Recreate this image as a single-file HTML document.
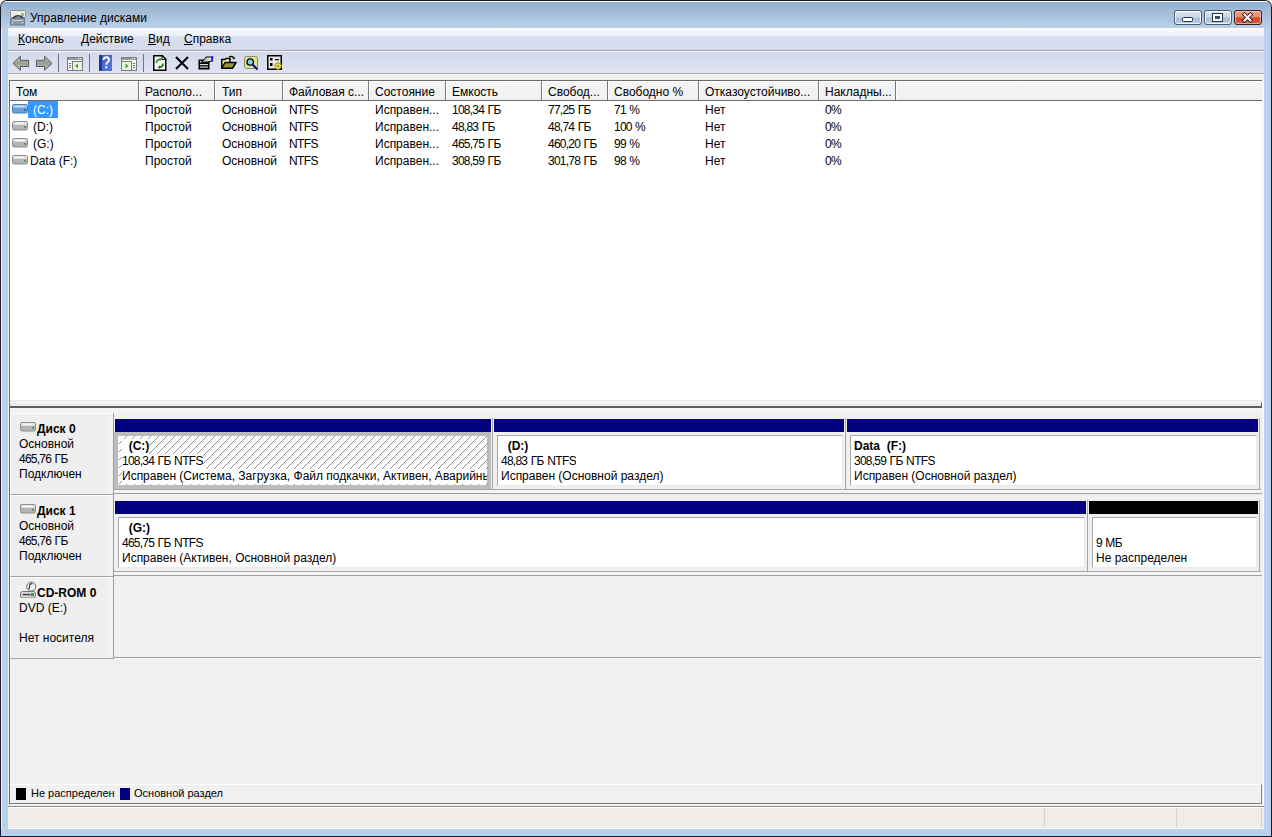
<!DOCTYPE html>
<html><head><meta charset="utf-8">
<style>
*{margin:0;padding:0;box-sizing:border-box}
html,body{width:1272px;height:837px;overflow:hidden;background:#f0f0f0}
body{position:relative;font-family:"Liberation Sans",sans-serif;font-size:12px;color:#000}
.a{position:absolute}
.t{position:absolute;white-space:nowrap;line-height:15px;font-size:12px}
.b{font-weight:bold}
.n{letter-spacing:-0.75px}
.g{letter-spacing:-0.6px}
u{text-decoration:underline;text-decoration-thickness:1px;text-underline-offset:1px}
</style></head><body>
<div class="a" style="left:0;top:0;width:1272px;height:837px;background:#1c1c28;border-radius:7px 7px 0 0"></div>
<div class="a" style="left:1px;top:1px;width:1270px;height:835px;background:linear-gradient(90deg,#f4f8fc 0px,#f4f8fc 1px,#b9d1ea 1px,#b9d1ea 1268px,#a7d7f4 1269px,#a7d7f4 1270px);border-radius:6px 6px 0 0"></div>
<div class="a" style="left:1px;top:1px;width:1270px;height:27px;border-radius:6px 6px 0 0;
 background:linear-gradient(#ffffff 0px,#ffffff 1px,#9aaec6 1px,#95b5d5 4px,#a6bcd4 11px,#abc4e2 17px,#b3cde5 23px,#bccde8 27px)"></div>
<div class="a" style="left:1px;top:829px;width:1270px;height:7px;background:linear-gradient(#bbd1ec,#b6cdea 5px,#a9dcf6 6px)"></div>
<div class="a" style="left:8px;top:28px;width:1256px;height:801px;background:#f0f0f0"></div>
<div class="a" style="left:8px;top:28px;width:1256px;height:22px;background:linear-gradient(#fdfdff 0px,#f4f6fb 3px,#eaeef8 8px,#d9dfee 9px,#d6dced 21px)"></div>
<div class="a" style="left:8px;top:50px;width:1256px;height:1px;background:#a0a6b4"></div>
<div class="a" style="left:8px;top:51px;width:1256px;height:1px;background:#f6f8fc"></div>
<div class="a" style="left:8px;top:52px;width:1256px;height:21px;background:linear-gradient(#d3d9ec,#dfe3f3)"></div>
<div class="a" style="left:8px;top:73px;width:1256px;height:1px;background:#a9adb8"></div>
<div class="a" style="left:8px;top:74px;width:1256px;height:6px;background:linear-gradient(#f4f4f0,#eeeeea)"></div>
<div class="t" style="left:30px;top:11px;color:#000">Управление дисками</div>
<div class="t" style="left:18px;top:32px"><u>К</u>онсоль</div>
<div class="t" style="left:81px;top:32px"><u>Д</u>ействие</div>
<div class="t" style="left:148px;top:32px"><u>В</u>ид</div>
<div class="t" style="left:184px;top:32px"><u>С</u>правка</div>

<!-- ICONS -->

<!-- title icon -->
<svg class="a" style="left:10px;top:9px" width="16" height="17" viewBox="0 0 16 17">
 <rect x="0.5" y="1.5" width="15" height="7" rx="1" fill="#eceee6" stroke="#8a8e92"/>
 <rect x="11" y="4" width="3" height="3.5" fill="#a9b878"/>
 <path d="M3 9 Q8 4.5 13 9" fill="none" stroke="#2a3038" stroke-width="1.6"/>
 <rect x="0.5" y="9.5" width="14" height="6.5" fill="#8d98a3" stroke="#6d7882"/>
 <rect x="2" y="11" width="11" height="1" fill="#c8d0d8"/>
 <rect x="2" y="13" width="1" height="1.5" fill="#dfe4e8"/><rect x="12" y="13" width="1" height="1.5" fill="#dfe4e8"/>
</svg>
<!-- title buttons -->
<div class="a" style="left:1174px;top:10px;width:28px;height:15px;border:1px solid #4d5b70;border-radius:3px;background:linear-gradient(#dde7f2 0px,#c9d7e7 6px,#a9bfd8 7px,#b8cce2 13px);box-shadow:inset 0 0 0 1px rgba(255,255,255,0.75)"></div>
<div class="a" style="left:1182px;top:17px;width:11px;height:5px;border:1px solid #283444;border-radius:1.5px;background:#fff"></div>
<div class="a" style="left:1204px;top:10px;width:28px;height:15px;border:1px solid #4d5b70;border-radius:3px;background:linear-gradient(#dde7f2 0px,#c9d7e7 6px,#a9bfd8 7px,#b8cce2 13px);box-shadow:inset 0 0 0 1px rgba(255,255,255,0.75)"></div>
<div class="a" style="left:1212px;top:13px;width:11px;height:9px;border:1px solid #283444;background:#fff"></div>
<div class="a" style="left:1215px;top:16px;width:5px;height:3px;background:#3b4a5c"></div>
<div class="a" style="left:1234px;top:10px;width:28px;height:15px;border:1px solid #3c1c1c;border-radius:3px;background:linear-gradient(#eaa08c 0px,#e28a72 6px,#c8482a 7px,#d2643c 13px);box-shadow:inset 0 0 0 1px rgba(255,220,210,0.6)"></div>
<svg class="a" style="left:1241px;top:12px" width="13" height="11" viewBox="0 0 13 11">
 <path d="M3.5 2.5 L9.5 8.5 M9.5 2.5 L3.5 8.5" stroke="#3a1818" stroke-width="3.8" stroke-linecap="square"/>
 <path d="M3.5 2.5 L9.5 8.5 M9.5 2.5 L3.5 8.5" stroke="#ffffff" stroke-width="2" stroke-linecap="square"/>
</svg>
<!-- toolbar -->
<svg class="a" style="left:12px;top:55px" width="18" height="17" viewBox="0 0 18 17">
 <defs><linearGradient id="ag" x1="0" y1="0" x2="0" y2="1"><stop offset="0" stop-color="#b8b8ae"/><stop offset="0.5" stop-color="#9c9c92"/><stop offset="1" stop-color="#c4c4bc"/></linearGradient></defs>
 <path d="M1 8.4 L8.4 1.2 V5.3 H16.6 V11.5 H8.4 V15.3 Z" fill="url(#ag)" stroke="#5a5a5a" stroke-linejoin="round"/>
</svg>
<svg class="a" style="left:35px;top:55px" width="18" height="17" viewBox="0 0 18 17">
 <path d="M17 8.4 L9.6 1.2 V5.3 H1.4 V11.5 H9.6 V15.3 Z" fill="url(#ag)" stroke="#5a5a5a" stroke-linejoin="round"/>
</svg>
<div class="a" style="left:58px;top:54px;width:1px;height:18px;background:#6e7484"></div>
<svg class="a" style="left:67px;top:57px" width="16" height="14" viewBox="0 0 16 14">
 <rect x="0.5" y="0.5" width="15" height="13" fill="#f6f6f6" stroke="#7c7c7c"/>
 <rect x="1" y="1" width="14" height="2" fill="#9a9a9a"/><rect x="11" y="1" width="1" height="1" fill="#fff"/><rect x="13" y="1" width="1" height="1" fill="#fff"/>
 <rect x="5.5" y="4.5" width="10" height="9" fill="#e6f4d8" stroke="#7c7c7c"/>
 <rect x="2" y="6" width="2" height="1" fill="#6a6a6a"/><rect x="2" y="8" width="2" height="1" fill="#6a6a6a"/><rect x="2" y="10" width="2" height="1" fill="#6a6a6a"/>
 <path d="M8 9 L11 6.5 V11.5 Z" fill="#4e9a3a"/>
</svg>
<div class="a" style="left:89px;top:54px;width:1px;height:18px;background:#6e7484"></div>
<svg class="a" style="left:99px;top:55px" width="13" height="16" viewBox="0 0 13 16">
 <defs><linearGradient id="hg" x1="0" y1="0" x2="1" y2="1"><stop offset="0" stop-color="#3a5cc8"/><stop offset="1" stop-color="#5a7ad8"/></linearGradient></defs>
 <rect x="0" y="0" width="13" height="16" fill="url(#hg)"/><rect x="0" y="0" width="3" height="16" fill="#1e3a9a"/>
 <path d="M4.6 5 Q4.6 2.3 7.3 2.3 Q10 2.3 10 4.8 Q10 6.5 8.2 7.5 Q7.3 8 7.3 9.8" fill="none" stroke="#fff" stroke-width="1.9"/>
 <rect x="6.3" y="11.3" width="2" height="2" fill="#fff"/>
</svg>
<svg class="a" style="left:121px;top:57px" width="16" height="14" viewBox="0 0 16 14">
 <rect x="0.5" y="0.5" width="15" height="13" fill="#f6f6f6" stroke="#7c7c7c"/>
 <rect x="1" y="1" width="14" height="2" fill="#9a9a9a"/><rect x="11" y="1" width="1" height="1" fill="#fff"/><rect x="13" y="1" width="1" height="1" fill="#fff"/>
 <rect x="0.5" y="4.5" width="10" height="9" fill="#e6f4d8" stroke="#7c7c7c"/>
 <rect x="12" y="6" width="2" height="1" fill="#6a6a6a"/><rect x="12" y="8" width="2" height="1" fill="#6a6a6a"/><rect x="12" y="10" width="2" height="1" fill="#6a6a6a"/>
 <path d="M7.5 9 L4.5 6.5 V11.5 Z" fill="#4e9a3a"/>
</svg>
<div class="a" style="left:143px;top:54px;width:1px;height:18px;background:#6e7484"></div>
<svg class="a" style="left:153px;top:55px" width="14" height="16" viewBox="0 0 14 16">
 <path d="M0.75 0.75 H9.5 L12.75 4 V15.25 H0.75 Z" fill="#fcfcf6" stroke="#000" stroke-width="1.5"/>
 <path d="M9 1 V4.5 H12.5" fill="none" stroke="#000" stroke-width="1"/>
 <path d="M3.5 8 Q3.5 4.5 7 4.3" fill="none" stroke="#2e9a3a" stroke-width="1.8"/><path d="M6.5 2.5 L9 4.3 L6.5 6.2 Z" fill="#2e9a3a"/>
 <path d="M10 8.5 Q10 12 6.5 12.2" fill="none" stroke="#1e7a2a" stroke-width="1.8"/><path d="M7 10.3 L4.5 12.2 L7 14 Z" fill="#1e7a2a"/>
</svg>
<svg class="a" style="left:175px;top:56px" width="14" height="14" viewBox="0 0 14 14">
 <path d="M1 1 L13 13 M13 1 L1 13" stroke="#000" stroke-width="2.1"/>
</svg>
<svg class="a" style="left:198px;top:55px" width="16" height="15" viewBox="0 0 16 15">
 <rect x="0.5" y="4.5" width="11" height="10" fill="#000"/>
 <rect x="2" y="9" width="8" height="1.2" fill="#d8d8d8"/><rect x="2" y="11.5" width="8" height="1.2" fill="#d8d8d8"/>
 <path d="M4 7 L8 2 L14 2 L14 6 L10 7 Z" fill="#e0e0e0" stroke="#000" stroke-width="1"/>
 <path d="M5 7 L8.5 3 M7 7 L10 3.5" stroke="#888" stroke-width="0.8"/>
 <rect x="13.6" y="1" width="1.6" height="5.5" fill="#2020c0"/>
 <rect x="2" y="6" width="1.5" height="1.5" fill="#e8e8e8"/>
</svg>
<svg class="a" style="left:221px;top:55px" width="16" height="14" viewBox="0 0 16 14">
 <path d="M0.75 13.25 V4.5 H4 L5 3.5 H9 V13.25 Z" fill="#f0f0a0" stroke="#000" stroke-width="1.5"/>
 <path d="M0.75 13.25 L4 7.5 H15 L11.5 13.25 Z" fill="#9a9430" stroke="#000" stroke-width="1.5" stroke-linejoin="round"/>
 <path d="M8 2.2 Q10.5 0.3 12.5 2.5" fill="none" stroke="#000" stroke-width="1.3"/><path d="M11.2 3.3 L13.8 1.8 L13.5 4.5 Z" fill="#000"/>
</svg>
<svg class="a" style="left:244px;top:56px" width="16" height="15" viewBox="0 0 16 15">
 <rect x="0.5" y="0.5" width="13" height="12" rx="2" fill="#e0e28a" stroke="#8a8a70"/>
 <circle cx="6.2" cy="6" r="3.2" fill="#8ad2e8" stroke="#000" stroke-width="1.3"/>
 <path d="M8.5 8.5 L13.5 13.5" stroke="#101080" stroke-width="2.2"/>
</svg>
<svg class="a" style="left:267px;top:55px" width="16" height="16" viewBox="0 0 16 16">
 <rect x="0.75" y="0.75" width="13.5" height="13.5" fill="#e6e6e2" stroke="#000" stroke-width="1.5"/>
 <rect x="3" y="3" width="2.5" height="2.5" fill="#000"/><rect x="8" y="4" width="4" height="1.2" fill="#000"/>
 <rect x="3" y="8" width="2.5" height="3" fill="#000"/>
 <circle cx="11" cy="11" r="3.2" fill="#e8e070" stroke="#a09020" stroke-width="1"/><circle cx="11" cy="11" r="1" fill="#807010"/>
 <path d="M11 6.8 V8 M11 14 V15.2 M6.8 11 H8 M14 11 H15.2" stroke="#c8b830" stroke-width="1.2"/>
</svg>

<div class="a" id="lv" style="left:9px;top:80px;width:1253px;height:320px;background:#fff;border-top:1px solid #6b6b6b;border-left:1px solid #6b6b6b"></div>
<div class="a" style="left:10px;top:81px;width:1252px;height:19px;background:linear-gradient(#ffffff 0px,#ffffff 1px,#f3f3f3 1px,#f1f1f1 18px)"></div>
<div class="a" style="left:10px;top:100px;width:1252px;height:1px;background:#6d6d6d"></div>
<div class="a" style="left:138px;top:81px;width:2px;height:19px;border-left:1px solid #7a7a7a;border-right:1px solid #fff"></div>
<div class="a" style="left:214px;top:81px;width:2px;height:19px;border-left:1px solid #7a7a7a;border-right:1px solid #fff"></div>
<div class="a" style="left:282px;top:81px;width:2px;height:19px;border-left:1px solid #7a7a7a;border-right:1px solid #fff"></div>
<div class="a" style="left:368px;top:81px;width:2px;height:19px;border-left:1px solid #7a7a7a;border-right:1px solid #fff"></div>
<div class="a" style="left:445px;top:81px;width:2px;height:19px;border-left:1px solid #7a7a7a;border-right:1px solid #fff"></div>
<div class="a" style="left:541px;top:81px;width:2px;height:19px;border-left:1px solid #7a7a7a;border-right:1px solid #fff"></div>
<div class="a" style="left:607px;top:81px;width:2px;height:19px;border-left:1px solid #7a7a7a;border-right:1px solid #fff"></div>
<div class="a" style="left:698px;top:81px;width:2px;height:19px;border-left:1px solid #7a7a7a;border-right:1px solid #fff"></div>
<div class="a" style="left:818px;top:81px;width:2px;height:19px;border-left:1px solid #7a7a7a;border-right:1px solid #fff"></div>
<div class="a" style="left:895px;top:81px;width:2px;height:19px;border-left:1px solid #7a7a7a;border-right:1px solid #fff"></div>
<div class="t" style="left:16px;top:85px">Том</div>
<div class="t" style="left:145px;top:85px">Располо...</div>
<div class="t" style="left:222px;top:85px">Тип</div>
<div class="t" style="left:289px;top:85px">Файловая с...</div>
<div class="t" style="left:375px;top:85px">Состояние</div>
<div class="t" style="left:452px;top:85px">Емкость</div>
<div class="t" style="left:548px;top:85px">Свобод...</div>
<div class="t" style="left:614px;top:85px">Свободно %</div>
<div class="t" style="left:705px;top:85px">Отказоустойчиво...</div>
<div class="t" style="left:825px;top:85px">Накладны...</div>
<div class="a" style="left:28px;top:101px;width:30px;height:17px;background:#3399ff"></div>
<div class="t" style="left:33px;top:103px;color:#fff">(C:)</div>
<div class="t" style="left:145px;top:103px">Простой</div>
<div class="t" style="left:222px;top:103px">Основной</div>
<div class="t" style="left:289px;top:103px"><span class="g">NTFS</span></div>
<div class="t" style="left:375px;top:103px">Исправен...</div>
<div class="t" style="left:452px;top:103px"><span class="n">108,34</span> <span class="g">ГБ</span></div>
<div class="t" style="left:548px;top:103px"><span class="n">77,25</span> <span class="g">ГБ</span></div>
<div class="t" style="left:614px;top:103px"><span class="n">71</span> %</div>
<div class="t" style="left:705px;top:103px">Нет</div>
<div class="t" style="left:825px;top:103px"><span class="n">0%</span></div>
<svg class="a" style="left:12px;top:104px" width="16" height="10" viewBox="0 0 16 10"><rect x="0.5" y="0.5" width="15" height="8.5" rx="1.5" fill="#6a9fd8" stroke="#4a7cb8"/><rect x="1" y="1" width="14" height="3" fill="#98c2ec"/><rect x="3" y="1.6" width="9" height="1.2" fill="#cfe4f8"/><rect x="12" y="5" width="2" height="2" fill="#3d6a9a"/></svg>
<div class="t" style="left:33px;top:120px">(D:)</div>
<div class="t" style="left:145px;top:120px">Простой</div>
<div class="t" style="left:222px;top:120px">Основной</div>
<div class="t" style="left:289px;top:120px"><span class="g">NTFS</span></div>
<div class="t" style="left:375px;top:120px">Исправен...</div>
<div class="t" style="left:452px;top:120px"><span class="n">48,83</span> <span class="g">ГБ</span></div>
<div class="t" style="left:548px;top:120px"><span class="n">48,74</span> <span class="g">ГБ</span></div>
<div class="t" style="left:614px;top:120px"><span class="n">100</span> %</div>
<div class="t" style="left:705px;top:120px">Нет</div>
<div class="t" style="left:825px;top:120px"><span class="n">0%</span></div>
<svg class="a" style="left:12px;top:121px" width="16" height="10" viewBox="0 0 16 10"><rect x="0.5" y="0.5" width="15" height="8.5" rx="1.5" fill="#b4b4b4" stroke="#8c8c8c"/><rect x="1" y="1" width="14" height="3" fill="#dcdcdc"/><rect x="3" y="1.6" width="9" height="1.2" fill="#ffffff"/><rect x="12" y="5" width="2" height="2" fill="#5f9a55"/></svg>
<div class="t" style="left:33px;top:137px">(G:)</div>
<div class="t" style="left:145px;top:137px">Простой</div>
<div class="t" style="left:222px;top:137px">Основной</div>
<div class="t" style="left:289px;top:137px"><span class="g">NTFS</span></div>
<div class="t" style="left:375px;top:137px">Исправен...</div>
<div class="t" style="left:452px;top:137px"><span class="n">465,75</span> <span class="g">ГБ</span></div>
<div class="t" style="left:548px;top:137px"><span class="n">460,20</span> <span class="g">ГБ</span></div>
<div class="t" style="left:614px;top:137px"><span class="n">99</span> %</div>
<div class="t" style="left:705px;top:137px">Нет</div>
<div class="t" style="left:825px;top:137px"><span class="n">0%</span></div>
<svg class="a" style="left:12px;top:138px" width="16" height="10" viewBox="0 0 16 10"><rect x="0.5" y="0.5" width="15" height="8.5" rx="1.5" fill="#b4b4b4" stroke="#8c8c8c"/><rect x="1" y="1" width="14" height="3" fill="#dcdcdc"/><rect x="3" y="1.6" width="9" height="1.2" fill="#ffffff"/><rect x="12" y="5" width="2" height="2" fill="#5f9a55"/></svg>
<div class="t" style="left:30px;top:154px">Data (F:)</div>
<div class="t" style="left:145px;top:154px">Простой</div>
<div class="t" style="left:222px;top:154px">Основной</div>
<div class="t" style="left:289px;top:154px"><span class="g">NTFS</span></div>
<div class="t" style="left:375px;top:154px">Исправен...</div>
<div class="t" style="left:452px;top:154px"><span class="n">308,59</span> <span class="g">ГБ</span></div>
<div class="t" style="left:548px;top:154px"><span class="n">301,78</span> <span class="g">ГБ</span></div>
<div class="t" style="left:614px;top:154px"><span class="n">98</span> %</div>
<div class="t" style="left:705px;top:154px">Нет</div>
<div class="t" style="left:825px;top:154px"><span class="n">0%</span></div>
<svg class="a" style="left:12px;top:155px" width="16" height="10" viewBox="0 0 16 10"><rect x="0.5" y="0.5" width="15" height="8.5" rx="1.5" fill="#b4b4b4" stroke="#8c8c8c"/><rect x="1" y="1" width="14" height="3" fill="#dcdcdc"/><rect x="3" y="1.6" width="9" height="1.2" fill="#ffffff"/><rect x="12" y="5" width="2" height="2" fill="#5f9a55"/></svg>
<div class="a" style="left:10px;top:400px;width:1252px;height:2px;background:#ececec"></div>
<div class="a" style="left:10px;top:402px;width:1252px;height:6px;background:#ebebeb;border-top:1px solid #fcfcfc;border-bottom:2px solid #5e5e5e;border-right:1px solid #5e5e5e"></div>
<div class="a" style="left:9px;top:80px;width:1px;height:724px;background:#6b6b6b"></div>
<div class="a" style="left:1263px;top:80px;width:1px;height:726px;background:#fbfbfb"></div>
<div class="a" style="left:10px;top:408px;width:1253px;height:376px;background:#f0f0f0"></div>
<div class="a" style="left:10px;top:408px;width:1252px;height:5px;background:#f3f3f3"></div>
<div class="a" style="left:10px;top:413px;width:103px;height:82px;border-top:1px solid #fff;border-left:1px solid #fafafa;border-bottom:1px solid #a0a0a0;background:#efefef"></div>
<div class="a" style="left:110px;top:414px;width:1px;height:80px;background:#f8f8f8"></div>
<div class="a" style="left:113px;top:413px;width:1px;height:82px;background:#a0a0a0"></div>
<svg class="a" style="left:20px;top:422px" width="16" height="10" viewBox="0 0 16 10"><rect x="0.5" y="0.5" width="15" height="8.5" rx="1.5" fill="#b4b4b4" stroke="#8c8c8c"/><rect x="1" y="1" width="14" height="3" fill="#dcdcdc"/><rect x="3" y="1.6" width="9" height="1.2" fill="#ffffff"/><rect x="12" y="5" width="2" height="2" fill="#5f9a55"/></svg>
<div class="t b" style="left:37px;top:422px">Диск <span class="n">0</span></div>
<div class="t" style="left:19px;top:437px">Основной</div>
<div class="t" style="left:19px;top:452px"><span class="n">465,76</span> <span class="g">ГБ</span></div>
<div class="t" style="left:19px;top:467px">Подключен</div>
<div class="a" style="left:114px;top:489px;width:1147px;height:1px;background:#a6a6a6"></div>
<div class="a" style="left:114px;top:490px;width:1147px;height:3px;background:#f4f4f4"></div>
<div class="a" style="left:114px;top:493px;width:1148px;height:1px;background:#a0a0a0"></div>
<div class="a" style="left:115px;top:419px;width:376px;height:13px;background:#000080"></div>
<div class="a" style="left:492px;top:418px;width:1px;height:72px;background:#a6a6a6"></div>
<div class="a" style="left:114px;top:432px;width:377px;height:57px;border:4px solid #bcbcbc;background:#fff"></div>
<svg class="a" style="left:119px;top:436px" width="369" height="49"><defs><pattern id="h" width="8" height="8" patternUnits="userSpaceOnUse"><path d="M-2 2L2 -2M0 8L8 0M6 10L10 6" stroke="#8c8c8c" stroke-width="1"/></pattern></defs><rect width="100%" height="100%" fill="url(#h)"/></svg>
<div class="t b" style="left:122px;top:439px;background:#fff;max-width:365px;overflow:hidden;line-height:15px">&nbsp;&nbsp;(C:)</div>
<div class="t" style="left:122px;top:454px;background:#fff;max-width:365px;overflow:hidden;line-height:15px"><span class="n">108,34</span> <span class="g">ГБ</span> <span class="g">NTFS</span></div>
<div class="t" style="left:122px;top:469px;background:#fff;max-width:365px;overflow:hidden;line-height:15px">Исправен (Система, Загрузка, Файл подкачки, Активен, Аварийнь</div>
<div class="a" style="left:494px;top:419px;width:350px;height:13px;background:#000080"></div>
<div class="a" style="left:845px;top:418px;width:1px;height:72px;background:#a6a6a6"></div>
<div class="a" style="left:497px;top:435px;width:346px;height:51px;border-top:1px solid #a8a8a8;border-left:1px solid #a8a8a8;border-right:1px solid #ececec;border-bottom:1px solid #ececec;background:#fff"></div>
<div class="t b" style="left:501px;top:439px;background:#fff;max-width:339px;overflow:hidden;line-height:15px">&nbsp;&nbsp;(D:)</div>
<div class="t" style="left:501px;top:454px;background:#fff;max-width:339px;overflow:hidden;line-height:15px"><span class="n">48,83</span> <span class="g">ГБ</span> <span class="g">NTFS</span></div>
<div class="t" style="left:501px;top:469px;background:#fff;max-width:339px;overflow:hidden;line-height:15px">Исправен (Основной раздел)</div>
<div class="a" style="left:847px;top:419px;width:411px;height:13px;background:#000080"></div>
<div class="a" style="left:1259px;top:418px;width:1px;height:72px;background:#a6a6a6"></div>
<div class="a" style="left:850px;top:435px;width:407px;height:51px;border-top:1px solid #a8a8a8;border-left:1px solid #a8a8a8;border-right:1px solid #ececec;border-bottom:1px solid #ececec;background:#fff"></div>
<div class="t b" style="left:854px;top:439px;background:#fff;max-width:400px;overflow:hidden;line-height:15px">Data&nbsp;&nbsp;(F:)</div>
<div class="t" style="left:854px;top:454px;background:#fff;max-width:400px;overflow:hidden;line-height:15px"><span class="n">308,59</span> <span class="g">ГБ</span> <span class="g">NTFS</span></div>
<div class="t" style="left:854px;top:469px;background:#fff;max-width:400px;overflow:hidden;line-height:15px">Исправен (Основной раздел)</div>
<div class="a" style="left:10px;top:495px;width:103px;height:82px;border-top:1px solid #fff;border-left:1px solid #fafafa;border-bottom:1px solid #a0a0a0;background:#efefef"></div>
<div class="a" style="left:110px;top:496px;width:1px;height:80px;background:#f8f8f8"></div>
<div class="a" style="left:113px;top:495px;width:1px;height:82px;background:#a0a0a0"></div>
<svg class="a" style="left:20px;top:504px" width="16" height="10" viewBox="0 0 16 10"><rect x="0.5" y="0.5" width="15" height="8.5" rx="1.5" fill="#b4b4b4" stroke="#8c8c8c"/><rect x="1" y="1" width="14" height="3" fill="#dcdcdc"/><rect x="3" y="1.6" width="9" height="1.2" fill="#ffffff"/><rect x="12" y="5" width="2" height="2" fill="#5f9a55"/></svg>
<div class="t b" style="left:37px;top:504px">Диск <span class="n">1</span></div>
<div class="t" style="left:19px;top:519px">Основной</div>
<div class="t" style="left:19px;top:534px"><span class="n">465,76</span> <span class="g">ГБ</span></div>
<div class="t" style="left:19px;top:549px">Подключен</div>
<div class="a" style="left:114px;top:571px;width:1147px;height:1px;background:#a6a6a6"></div>
<div class="a" style="left:114px;top:572px;width:1147px;height:3px;background:#f4f4f4"></div>
<div class="a" style="left:114px;top:575px;width:1148px;height:1px;background:#a0a0a0"></div>
<div class="a" style="left:115px;top:501px;width:971px;height:13px;background:#000080"></div>
<div class="a" style="left:1087px;top:500px;width:1px;height:72px;background:#a6a6a6"></div>
<div class="a" style="left:118px;top:517px;width:967px;height:51px;border-top:1px solid #a8a8a8;border-left:1px solid #a8a8a8;border-right:1px solid #ececec;border-bottom:1px solid #ececec;background:#fff"></div>
<div class="t b" style="left:122px;top:521px;background:#fff;max-width:960px;overflow:hidden;line-height:15px">&nbsp;&nbsp;(G:)</div>
<div class="t" style="left:122px;top:536px;background:#fff;max-width:960px;overflow:hidden;line-height:15px"><span class="n">465,75</span> <span class="g">ГБ</span> <span class="g">NTFS</span></div>
<div class="t" style="left:122px;top:551px;background:#fff;max-width:960px;overflow:hidden;line-height:15px">Исправен (Активен, Основной раздел)</div>
<div class="a" style="left:1089px;top:501px;width:169px;height:13px;background:#000"></div>
<div class="a" style="left:1259px;top:500px;width:1px;height:72px;background:#a6a6a6"></div>
<div class="a" style="left:1092px;top:517px;width:165px;height:51px;border-top:1px solid #a8a8a8;border-left:1px solid #a8a8a8;border-right:1px solid #ececec;border-bottom:1px solid #ececec;background:#fff"></div>
<div class="t" style="left:1096px;top:536px;background:#fff;max-width:158px;overflow:hidden;line-height:15px"><span class="n">9</span> <span class="g">МБ</span></div>
<div class="t" style="left:1096px;top:551px;background:#fff;max-width:158px;overflow:hidden;line-height:15px">Не распределен</div>
<div class="a" style="left:10px;top:577px;width:103px;height:82px;border-top:1px solid #fff;border-left:1px solid #fafafa;border-bottom:1px solid #a0a0a0;background:#efefef"></div>
<div class="a" style="left:110px;top:578px;width:1px;height:80px;background:#f8f8f8"></div>
<div class="a" style="left:113px;top:575px;width:1px;height:84px;background:#a0a0a0"></div>
<div class="a" style="left:114px;top:657px;width:1147px;height:1px;background:#a0a0a0"></div>
<div class="a" style="left:114px;top:658px;width:1147px;height:2px;background:#f6f6f6"></div>
<svg class="a" style="left:20px;top:581px" width="17" height="17" viewBox="0 0 17 17"><circle cx="11.2" cy="5.6" r="4.5" fill="#f2f2f2" stroke="#6a6a6a"/><path d="M12.5 2.8 Q9 2.5 9.5 5 Q10 7 8.5 8.2" fill="none" stroke="#404040" stroke-width="1.3"/><rect x="0.5" y="10.5" width="15" height="6.5" rx="2" fill="#dadada" stroke="#7a7a7a"/><rect x="2.5" y="12.8" width="8" height="1.6" fill="#4a4a4a"/><rect x="11" y="12" width="3" height="3.2" fill="#4f8f3f"/></svg>
<div class="t b" style="left:37px;top:586px">CD-ROM 0</div>
<div class="t" style="left:19px;top:601px">DVD (E:)</div>
<div class="t" style="left:19px;top:631px">Нет носителя</div>
<div class="a" style="left:10px;top:784px;width:1252px;height:20px;background:#f0f0f0;border-top:1px solid #fdfdfd;border-right:1px solid #808080;border-bottom:1px solid #7c7c7c"></div>
<div class="a" style="left:16px;top:788px;width:10px;height:12px;background:#000"></div>
<div class="t" style="left:31px;top:786px;font-size:11px">Не распределен</div>
<div class="a" style="left:120px;top:788px;width:10px;height:12px;background:#000080"></div>
<div class="t" style="left:134px;top:786px;font-size:11px">Основной раздел</div>
<div class="a" style="left:8px;top:806px;width:1256px;height:1px;background:#8c8c8c"></div>
<div class="a" style="left:8px;top:807px;width:1256px;height:22px;background:#efecea;border-top:1px solid #fff;border-bottom:1px solid #fff"></div>
<div class="a" style="left:1044px;top:808px;width:1px;height:20px;background:#d6d4d2"></div>
<div class="a" style="left:1176px;top:808px;width:1px;height:20px;background:#d6d4d2"></div>
<div class="a" style="left:1261px;top:808px;width:1px;height:20px;background:#d6d4d2"></div>
</body></html>
